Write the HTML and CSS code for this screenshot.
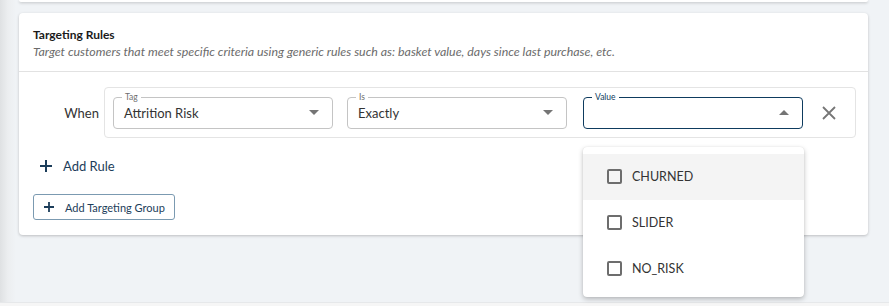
FILE: index.html
```html
<!DOCTYPE html>
<html>
<head>
    <title>Targeting Rules</title>
    <link rel="stylesheet" href="styles.css">
</head>
<body>
    <div class="page">
        <div class="card card-prev"></div>

        <div class="card">
            <div class="card-header">
                <h2>Targeting Rules</h2>
                <p>Target customers that meet specific criteria using generic rules such as: basket value, days since last purchase, etc.</p>
            </div>

            <div class="card-body">
                <div class="rule-line">
                    <span class="when">When</span>
                    <div class="rule-box">
                        <div class="field">
                            <span class="field-label">Tag</span>
                            <span class="field-value">Attrition Risk</span>
                            <span class="arrow down"></span>
                        </div>
                        <div class="field">
                            <span class="field-label">Is</span>
                            <span class="field-value">Exactly</span>
                            <span class="arrow down"></span>
                        </div>
                        <div class="field field-open">
                            <span class="field-label">Value</span>
                            <span class="field-value"></span>
                            <span class="arrow up"></span>
                            <ul class="menu">
                                <li class="hover"><span class="check"></span>CHURNED</li>
                                <li><span class="check"></span>SLIDER</li>
                                <li><span class="check"></span>NO_RISK</li>
                            </ul>
                        </div>
                        <svg class="remove" width="14" height="14" viewBox="0 0 14 14">
                            <path d="M1 1 L13 13 M13 1 L1 13" stroke="#767676" stroke-width="1.8" fill="none"/>
                        </svg>
                    </div>
                </div>

                <div class="add-rule">
                    <svg width="12" height="12" viewBox="0 0 12 12">
                        <path d="M6 0 V12 M0 6 H12" stroke="#1c3d5a" stroke-width="2" fill="none"/>
                    </svg>
                    <span>Add Rule</span>
                </div>

                <button class="add-group">
                    <svg width="10" height="10" viewBox="0 0 10 10">
                        <path d="M5 0 V10 M0 5 H10" stroke="#1c3d5a" stroke-width="1.8" fill="none"/>
                    </svg>
                    Add Targeting Group
                </button>
            </div>
        </div>
    </div>
    <div class="footer"></div>
</body>
</html>
```

FILE: styles.css
```css
html, body {
    height: 100%;
}

body {
    margin: 0;
    font-family: Lato, "Open Sans", Arial, sans-serif;
    background: linear-gradient(to right, #dfe1e3 0, #eceef0 8px, #f0f3f6 16px);
    color: #333;
    overflow: hidden;
    display: flex;
    flex-direction: column;
}

.page {
    padding: 0 21px 0 19px;
    flex: 1;
}

.card {
    background: #fff;
    border-radius: 4px;
    box-shadow: 0 1px 3px rgba(0, 0, 0, 0.22);
}

.card-prev {
    height: 2px;
    margin-bottom: 11px;
    border-radius: 0 0 4px 4px;
}

.card-header {
    padding: 14px 14px 11px;
    border-bottom: 1px solid #e2e2e2;
}

.card-header h2 {
    margin: 0;
    font-size: 12px;
    font-weight: 700;
    color: #1b1b1b;
    line-height: 15px;
}

.card-header p {
    margin: 2px 0 0;
    font-size: 12.4px;
    font-style: italic;
    color: #6b6b6b;
    line-height: 16px;
}

.card-body {
    padding: 15px 12px 15px 14px;
}

.rule-line {
    display: flex;
    align-items: center;
}

.when {
    flex: none;
    width: 71px;
    box-sizing: border-box;
    text-align: right;
    padding-right: 5px;
    font-size: 13px;
    color: #333;
}

.rule-box {
    flex: 1;
    display: flex;
    align-items: center;
    height: 49px;
    padding: 0 0 0 8px;
    border: 1px solid #e4e4e4;
    border-radius: 4px;
}

.field {
    flex: none;
    position: relative;
    height: 30px;
    border: 1px solid #c4c4c4;
    border-radius: 4px;
    display: flex;
    align-items: center;
    padding: 0 13px 0 10px;
    box-sizing: content-box;
    width: 195px;
    margin-right: 14px;
}

.field-open {
    border-color: #0e3b5e;
}

.field-label {
    position: absolute;
    top: -7px;
    left: 8px;
    padding: 0 3px;
    background: #fff;
    font-size: 8.5px;
    line-height: 12px;
    color: #6e6e6e;
}

.field-open .field-label {
    color: #0e3b5e;
}

.field-value {
    flex: 1;
    font-size: 13px;
    color: #333;
}

.arrow {
    width: 0;
    height: 0;
    border-left: 5px solid transparent;
    border-right: 5px solid transparent;
}

.arrow.down {
    border-top: 5px solid #757575;
}

.arrow.up {
    border-bottom: 5px solid #757575;
}

.field + .field {
    margin-right: 16px;
}

.field + .field + .field {
    margin-right: 19px;
}

.menu {
    position: absolute;
    top: 49px;
    left: -1px;
    width: 221px;
    margin: 0;
    padding: 7px 0 5px;
    list-style: none;
    background: #fff;
    border-radius: 4px;
    box-shadow: 0 2px 5px rgba(0, 0, 0, 0.25), 0 0 1px rgba(0, 0, 0, 0.12);
    z-index: 2;
}

.menu li {
    display: flex;
    align-items: center;
    height: 46px;
    padding-left: 24px;
    font-size: 12.5px;
    color: #333;
}

.menu li.hover {
    background: #f4f4f4;
}

.check {
    width: 11px;
    height: 11px;
    border: 2px solid #6d6d6d;
    border-radius: 2px;
    margin-right: 10px;
}

.add-rule {
    display: flex;
    align-items: center;
    margin: 20px 0 0 7px;
    font-size: 13px;
    color: #1c3d5a;
}

.add-rule svg {
    margin-right: 11px;
}

.add-group {
    display: flex;
    align-items: center;
    margin-top: 20px;
    height: 26px;
    padding: 0 9px 0 10px;
    background: #fff;
    border: 1px solid #7b9ab1;
    border-radius: 3px;
    font-family: Lato, "Open Sans", Arial, sans-serif;
    font-size: 11px;
    color: #1c3d5a;
}

.add-group svg {
    margin-right: 11px;
}

.footer {
    height: 3px;
    background: #f6f6f6;
    border-top: 1px solid #e6e8ea;
}
```
